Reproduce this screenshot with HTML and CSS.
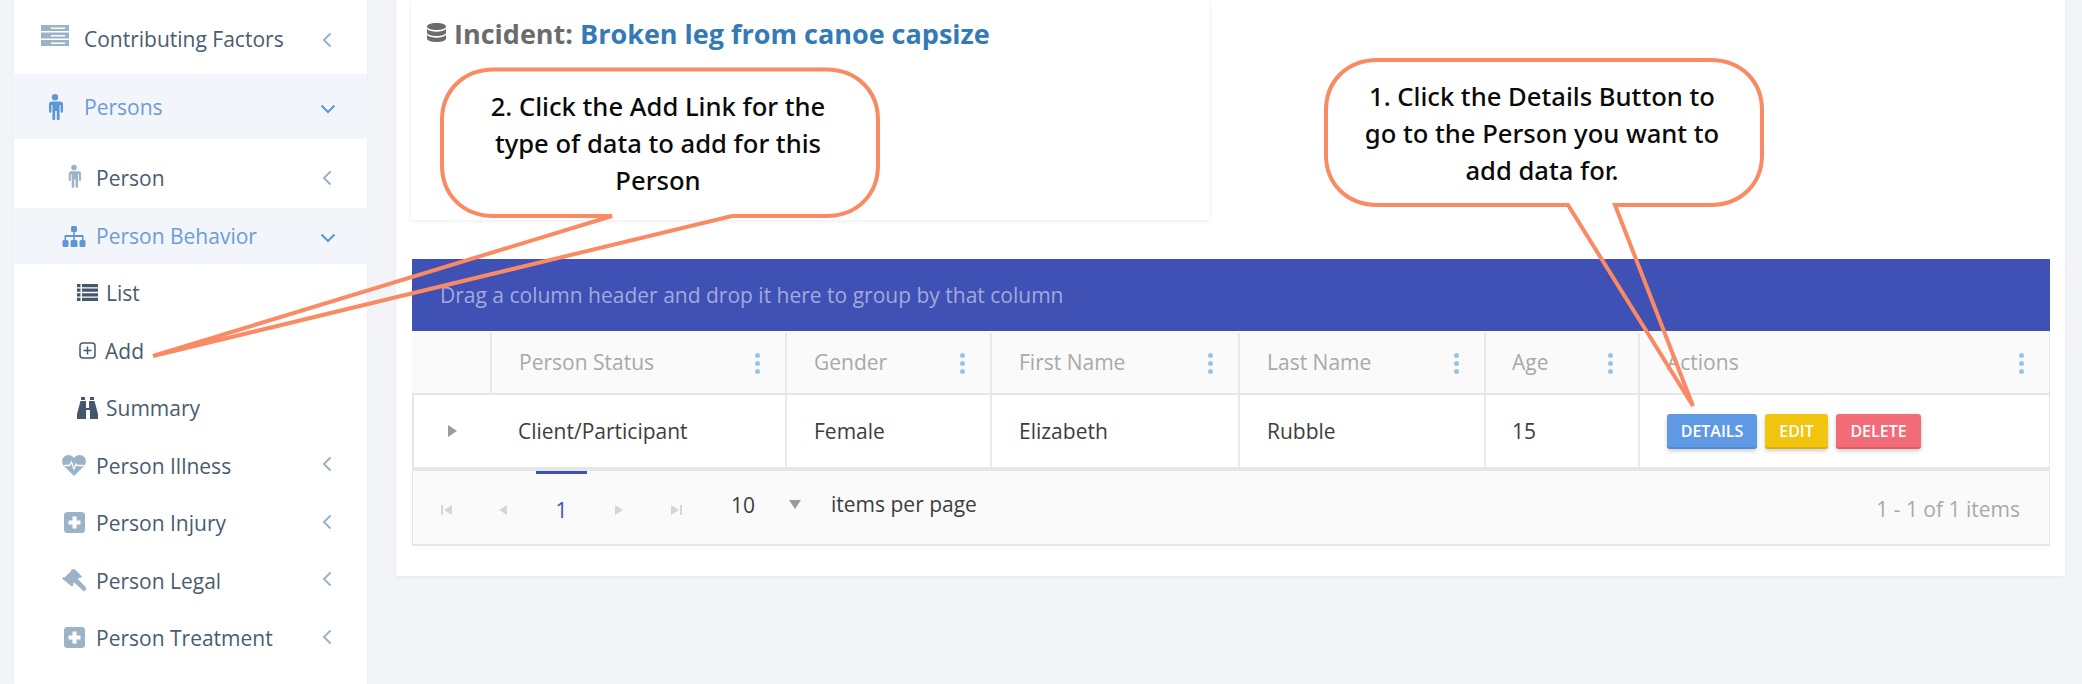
FILE: index.html
```html
<!DOCTYPE html>
<html lang="en">
<head>
<meta charset="utf-8">
<title>Incident</title>
<link rel="stylesheet" href="styles.css">
</head>
<body>
<div class="page">
  <nav class="sidebar">
    <a class="item top first">
      <svg class="ico i-server" viewBox="0 0 28 21"><path class="fm" d="M0 0h28v6H0zM0 7.500h28v6H0zM0 15h28v6H0z"/><path class="cut" d="M10 2.500h14v1.400H10zM10 10h14v1.400H10zM10 17.500h14v1.400H10z"/></svg>
      <span class="label">Contributing Factors</span>
      <svg class="chev left" viewBox="0 0 10 16"><path d="M8.500 1.500 2 8l6.500 6.500"/></svg>
    </a>
    <a class="item top open">
      <svg class="ico i-male" viewBox="0 0 16 26"><circle cx="8" cy="3.200" r="3.200"/><path d="M3 7.500h10a3 3 0 0 1 3 3v7a1.200 1.200 0 0 1-2.400 0v-6.500h-1v14a1.400 1.400 0 0 1-2.800 0v-8h-1.600v8a1.400 1.400 0 0 1-2.800 0V11h-1v6.500a1.200 1.200 0 0 1-2.400 0v-7a3 3 0 0 1 3-3z"/></svg>
      <span class="label">Persons</span>
      <svg class="chev down" viewBox="0 0 16 10"><path d="M1.500 1.500 8 8l6.500-6.500"/></svg>
    </a>
    <a class="item sub person">
      <svg class="ico i-male2" viewBox="0 0 16 26"><circle cx="8" cy="3.200" r="3.200"/><path d="M3 7.500h10a3 3 0 0 1 3 3v7a1.200 1.200 0 0 1-2.400 0v-6.500h-1v14a1.400 1.400 0 0 1-2.800 0v-8h-1.600v8a1.400 1.400 0 0 1-2.800 0V11h-1v6.500a1.200 1.200 0 0 1-2.400 0v-7a3 3 0 0 1 3-3z"/></svg>
      <span class="label">Person</span>
      <svg class="chev left" viewBox="0 0 10 16"><path d="M8.500 1.500 2 8l6.500 6.500"/></svg>
    </a>
    <a class="item sub open behavior">
      <svg class="ico i-site" viewBox="0 0 24 21"><path d="M9 1.500A1.500 1.500 0 0 1 10.500 0h3A1.500 1.500 0 0 1 15 1.500v3A1.500 1.500 0 0 1 13.500 6h-.7v3h7.700a1 1 0 0 1 1 1v4h.9a1.500 1.500 0 0 1 1.100 1.500v4A1.500 1.500 0 0 1 22 21h-3a1.500 1.500 0 0 1-1.500-1.500v-4A1.500 1.500 0 0 1 19 14h1v-3h-7.200v3H14a1.500 1.500 0 0 1 1.500 1.500v4A1.500 1.500 0 0 1 14 21h-4a1.500 1.500 0 0 1-1.500-1.500v-4A1.500 1.500 0 0 1 10 14h1.200v-3H4v3h1a1.500 1.500 0 0 1 1.500 1.500v4A1.500 1.500 0 0 1 5 21H2A1.500 1.500 0 0 1 .5 19.500v-4A1.500 1.500 0 0 1 1.500 14h1v-4a1 1 0 0 1 1-1h7.700V6h-.7A1.500 1.500 0 0 1 9 4.500z"/></svg>
      <span class="label">Person Behavior</span>
      <svg class="chev down" viewBox="0 0 16 10"><path d="M1.500 1.500 8 8l6.500-6.500"/></svg>
    </a>
    <a class="item leaf">
      <svg class="ico i-list" viewBox="0 0 21 17"><path d="M0 0h3.500v3.200H0zM5 0h16v3.200H5zM0 4.600h3.500v3.200H0zM5 4.600h16v3.200H5zM0 9.200h3.500v3.200H0zM5 9.200h16v3.200H5zM0 13.800h3.500V17H0zM5 13.800h16V17H5z"/></svg>
      <span class="label">List</span>
    </a>
    <a class="item leaf add">
      <svg class="ico i-add" viewBox="0 0 17 17"><rect x="1" y="1" width="15" height="15" rx="3"/><path d="M8.500 4.500v8M4.500 8.500h8"/></svg>
      <span class="label">Add</span>
    </a>
    <a class="item leaf">
      <svg class="ico i-bino" viewBox="0 0 21 22"><path d="M4 0h4v3H4zM13 0h4v3h-4zM3.500 4H9v7h3V4h5.500l3.500 13v5h-8v-9H9v9H0v-5z"/></svg>
      <span class="label">Summary</span>
    </a>
    <a class="item leaf2">
      <svg class="ico i-heart" viewBox="0 0 24 21"><path class="fm" d="M12 21 1.500 10.500C-1.500 6.500.5 0 6.500 0c2.600 0 4.300 1.400 5.500 3 1.200-1.600 2.900-3 5.500-3 6 0 8 6.500 5 10.500z"/><path class="ecg" d="M2 10.500h5.500l2-3.500 2.500 7 2-5 1.200 1.500H22"/></svg>
      <span class="label">Person Illness</span>
      <svg class="chev left" viewBox="0 0 10 16"><path d="M8.500 1.500 2 8l6.500 6.500"/></svg>
    </a>
    <a class="item leaf2">
      <svg class="ico i-plus" viewBox="0 0 21 21"><rect width="21" height="21" rx="3.500"/><path class="cut" d="M8.500 4.500h4v4h4v4h-4v4h-4v-4h-4v-4h4z"/></svg>
      <span class="label">Person Injury</span>
      <svg class="chev left" viewBox="0 0 10 16"><path d="M8.500 1.500 2 8l6.500 6.500"/></svg>
    </a>
    <a class="item leaf2">
      <svg class="ico i-gavel" viewBox="0 0 24 23"><path d="M12.500 0 20 7.500l-1.500 1.500-1-.5-1.500 1.500 7.600 8a2.200 2.200 0 0 1-3.200 3.200l-8-7.700-1.500 1.500.5 1-1.500 1.500L0 9.500 1.500 8l1 .5 7-7-.5-1z"/></svg>
      <span class="label">Person Legal</span>
      <svg class="chev left" viewBox="0 0 10 16"><path d="M8.500 1.500 2 8l6.500 6.500"/></svg>
    </a>
    <a class="item leaf2">
      <svg class="ico i-plus" viewBox="0 0 21 21"><rect width="21" height="21" rx="3.500"/><path class="cut" d="M8.500 4.500h4v4h4v4h-4v4h-4v-4h-4v-4h4z"/></svg>
      <span class="label">Person Treatment</span>
      <svg class="chev left" viewBox="0 0 10 16"><path d="M8.500 1.500 2 8l6.500 6.500"/></svg>
    </a>
  </nav>

  <main class="content">
    <div class="panel">
      <section class="head-card">
        <h1 class="heading">
          <svg class="i-db" viewBox="0 0 19 22"><path d="M9.500 0C14.700 0 19 1.500 19 3.500S14.700 7 9.500 7 0 5.500 0 3.500 4.300 0 9.500 0zM0 6c1.800 1.900 5.500 2.700 9.500 2.700S17.200 7.900 19 6v3.500c0 2-4.300 3.500-9.500 3.500S0 11.500 0 9.500zM0 12c1.800 1.900 5.500 2.700 9.500 2.700s7.700-.8 9.500-2.700v3.500c0 2-4.300 3.500-9.500 3.500S0 17.500 0 15.500z"/></svg>
          <span class="h-key">Incident:</span>
          <span class="h-val">Broken leg from canoe capsize</span>
        </h1>
      </section>

      <section class="grid">
        <div class="group-bar">Drag a column header and drop it here to group by that column</div>
        <div class="row header">
          <div class="cell exp"></div>
          <div class="cell">Person Status<span class="dots"><i></i><i></i><i></i></span></div>
          <div class="cell">Gender<span class="dots"><i></i><i></i><i></i></span></div>
          <div class="cell">First Name<span class="dots"><i></i><i></i><i></i></span></div>
          <div class="cell">Last Name<span class="dots"><i></i><i></i><i></i></span></div>
          <div class="cell age">Age<span class="dots"><i></i><i></i><i></i></span></div>
          <div class="cell">Actions<span class="dots"><i></i><i></i><i></i></span></div>
        </div>
        <div class="row body">
          <div class="cell exp"><span class="tri-r"></span></div>
          <div class="cell status">Client/Participant</div>
          <div class="cell">Female</div>
          <div class="cell">Elizabeth</div>
          <div class="cell">Rubble</div>
          <div class="cell age">15</div>
          <div class="cell actions">
            <button class="btn blue">Details</button>
            <button class="btn yellow">Edit</button>
            <button class="btn red">Delete</button>
          </div>
        </div>
        <div class="pager">
          <svg class="pg first-pg" viewBox="0 0 12 12"><path d="M0 1h2v10H0zM11 1v10L3 6z"/></svg>
          <svg class="pg prev-pg" viewBox="0 0 9 12"><path d="M9 1v10L1 6z"/></svg>
          <span class="page-num">1</span>
          <svg class="pg next-pg" viewBox="0 0 9 12"><path d="M0 1v10l8-5z"/></svg>
          <svg class="pg last-pg" viewBox="0 0 12 12"><path d="M1 1v10l8-5zM10 1h2v10h-2z"/></svg>
          <span class="size">10</span>
          <span class="tri-d"></span>
          <span class="per">items per page</span>
          <span class="info">1 - 1 of 1 items</span>
        </div>
      </section>
    </div>
  </main>
</div>

<div class="callout c2">
  <svg viewBox="0 0 2082 684"><path d="M494 69.500H826C858 69.500 878 92 878 120V165C878 194 858 216 826 216H732L153 356 612 216H494C462 216 442 194 442 165V120C442 92 462 69.500 494 69.500Z"/></svg>
  <p class="c-text t2">2. Click the Add Link for the<br>type of data to add for this<br>Person</p>
  <p class="c-text t1">1. Click the Details Button to<br>go to the Person you want to<br>add data for.</p>
  <svg viewBox="0 0 2082 684"><path d="M1378 60H1710C1742 60 1762 82 1762 110V155C1762 183 1742 205 1710 205H1615L1693 406 1568 205H1378C1346 205 1326 183 1326 155V110C1326 82 1346 60 1378 60Z"/></svg>
</div>
</body>
</html>
```

FILE: styles.css
```css
* { box-sizing: border-box; }
html, body { margin: 0; padding: 0; height: 684px; overflow: hidden; background: #f3f4f8; }
body { font-family: "Open Sans", sans-serif; color: #333; position: relative; }
.page { display: flex; height: 684px; padding-left: 14px; }

/* sidebar */
.sidebar { width: 353px; background: #fff; display: flex; flex-direction: column; flex: none; box-shadow: 0 0 6px rgba(0,0,0,.03); }
.item { display: flex; align-items: center; position: relative; font-size: 21px; color: #4a5c70; }
.label { white-space: nowrap; }
.top { height: 65px; padding-left: 27px; }
.top .label { margin-left: 15px; }
.first { height: 74px; padding-top: 3px; }
.open { background: #f2f5f9; color: #6c9cd8; }
.sub { padding-left: 48px; }
.person { height: 69px; padding-top: 9px; }
.behavior { height: 56px; }
.leaf { height: 57.500px; padding-left: 63px; }
.add { padding-top: 1px; }
.leaf2 { height: 57.500px; padding-left: 48px; padding-top: 1px; }
.ico { flex: none; fill: #9ab3c7; }
.cut { fill: #fff; }
.i-server { width: 28px; height: 21px; margin-top: -7px; }
.i-male { width: 16px; height: 26px; fill: #5f97d6; margin-left: 6px; margin-right: 6px; }
.i-male2 { width: 14px; height: 24px; margin-left: 5px; margin-right: 15px; margin-top: -4px; }
.i-site { width: 24px; height: 21px; fill: #5f97d6; margin-right: 10px; }
.i-list { width: 21px; height: 17px; fill: #44576c; margin-right: 8px; margin-left: 0; }
.i-add { width: 17px; height: 17px; fill: none; stroke: #44576c; stroke-width: 1.500; margin-left: 2px; margin-right: 9px; }
.i-bino { width: 21px; height: 22px; fill: #44576c; margin-right: 8px; }
.i-heart { width: 24px; height: 21px; margin-right: 10px; margin-top: -1px; }
.ecg { fill: none; stroke: #fff; stroke-width: 1.300; }
.i-plus { width: 21px; height: 21px; margin-left: 2px; margin-right: 11px; margin-top: -1px; }
.i-gavel { width: 24px; height: 23px; margin-right: 10px; margin-top: -1px; }
.chev { position: absolute; fill: none; stroke: #9ab3c7; stroke-width: 2; }
.chev.left { width: 10px; height: 16px; left: 308px; top: 50%; margin-top: -8px; }
.chev.down { width: 16px; height: 10px; left: 306px; top: 50%; margin-top: -3px; stroke: #5f97d6; }
.first .chev.left { margin-top: -5px; }
.person .chev.left { margin-top: -4px; }
.leaf2 .chev.left { margin-top: -9px; }

/* main */
.content { flex: 1; padding-left: 29px; padding-right: 17px; }
.panel { background: #fff; height: 576px; padding: 0 15px 0 15px; box-shadow: 0 1px 4px rgba(0,0,0,.05); }
.head-card { width: 798px; height: 220px; background: #fff; box-shadow: 0 1px 5px rgba(0,0,0,.09); padding: 16px 0 0 16px; }
.heading { margin: 0; font-size: 27px; font-weight: 700; line-height: 36px; display: flex; align-items: center; white-space: nowrap; }
.i-db { width: 19px; height: 22px; fill: #6b6b6b; margin-right: 8px; }
.h-key { color: #6b6b6b; margin-right: 7px; }
.h-val { color: #337ab7; }

/* grid */
.grid { margin-top: 39px; width: 1638px; margin-left: 1px; border: solid #e6e6e6; border-width: 0 1px 0 1px; }
.group-bar { height: 72px; background: #3f51b5; color: #a2a9dc; font-size: 21px; display: flex; align-items: center; padding-left: 28px; margin: 0 -1px; }
.row { display: grid; grid-template-columns: 80px 295px 205px 248px 246px 154px 1fr; margin-left: -1px; }
.header { height: 64px; background: #fafafa; color: #a9a9a9; border-bottom: 2px solid #e6e6e6; padding-top: 2px; }
.body { height: 76px; color: #3d3d3d; background: #fff; border-bottom: 4px solid #e6e6e6; box-shadow: inset 2px 0 #e6e6e6; }
.cell { font-size: 21px; display: flex; align-items: center; padding-left: 27px; border-right: 2px solid #e9e9e9; position: relative; white-space: nowrap; }
.cell:last-child { border-right: 0; }
.header .cell { padding-bottom: 2px; }
.body .status { padding-left: 26px; }
.age { padding-left: 26px; }
.exp { justify-content: center; padding-left: 0; }
.body .exp { border-right: 0; padding-left: 0; }
.dots { position: absolute; right: 25px; top: 20px; display: flex; flex-direction: column; gap: 3px; }
.dots i { width: 5px; height: 5px; border-radius: 50%; background: #9dc3e4; }
.tri-r { width: 0; height: 0; border-left: 9px solid #9b9b9b; border-top: 6px solid transparent; border-bottom: 6px solid transparent; }
.btn { height: 35px; border: 0; border-radius: 3px; color: #fff; font: 600 16px "Open Sans", sans-serif; text-transform: uppercase; padding: 0; box-shadow: 0 2px 4px rgba(0,0,0,.2); margin-top: 1px; }
.actions { gap: 8px; padding-left: 27px; }
.blue { width: 90px; background: #5f99e3; border-bottom: 2px solid #4f8bd9; }
.yellow { width: 63px; background: #f1c40f; border-bottom: 2px solid #d8b00c; }
.red { width: 85px; background: #f26c78; border-bottom: 2px solid #e55c69; }

.pager { height: 75px; background: #fafafa; border-bottom: 2px solid #e6e6e6; position: relative; display: flex; align-items: center; font-size: 21px; margin-top: 0; }
.pg { fill: #d6d6d6; height: 14px; flex: none; margin-top: 4px; }
.first-pg { width: 12px; margin-left: 28px; }
.prev-pg { width: 9px; margin-left: 45px; }
.page-num { width: 51px; margin-left: 29px; text-align: center; color: #3f51b5; margin-top: 4px; line-height: 36px; border-top: 0; position: relative; }
.page-num::before { content: ""; position: absolute; left: 0; right: 0; top: -21px; height: 3px; background: #3f51b5; }
.next-pg { width: 9px; margin-left: 28px; }
.last-pg { width: 12px; margin-left: 46px; }
.size { margin-left: 49px; color: #3d3d3d; margin-top: -6px; }
.tri-d { margin-left: 34px; width: 0; height: 0; border-top: 9px solid #9b9b9b; border-left: 6px solid transparent; border-right: 6px solid transparent; margin-top: -6px; }
.per { margin-left: 30px; color: #3d3d3d; margin-top: -8px; }
.info { margin-left: auto; margin-right: 29px; color: #a9a9a9; margin-top: 2px; }

/* callouts (overlay) */
.callout { position: absolute; left: 0; top: 0; width: 2082px; height: 684px; pointer-events: none; }
.callout svg { position: absolute; left: 0; top: 0; width: 2082px; height: 684px; }
.callout path { fill: none; stroke: #f98a63; stroke-width: 4; stroke-linejoin: miter; }
.c-text { position: absolute; margin: 0; text-align: center; color: #0a0a0a; font: 500 25.600px/37px "Noto Sans", sans-serif; white-space: nowrap; }
.t2 { left: 441px; width: 434px; top: 88px; }
.t1 { left: 1325px; width: 434px; top: 78px; }
```
